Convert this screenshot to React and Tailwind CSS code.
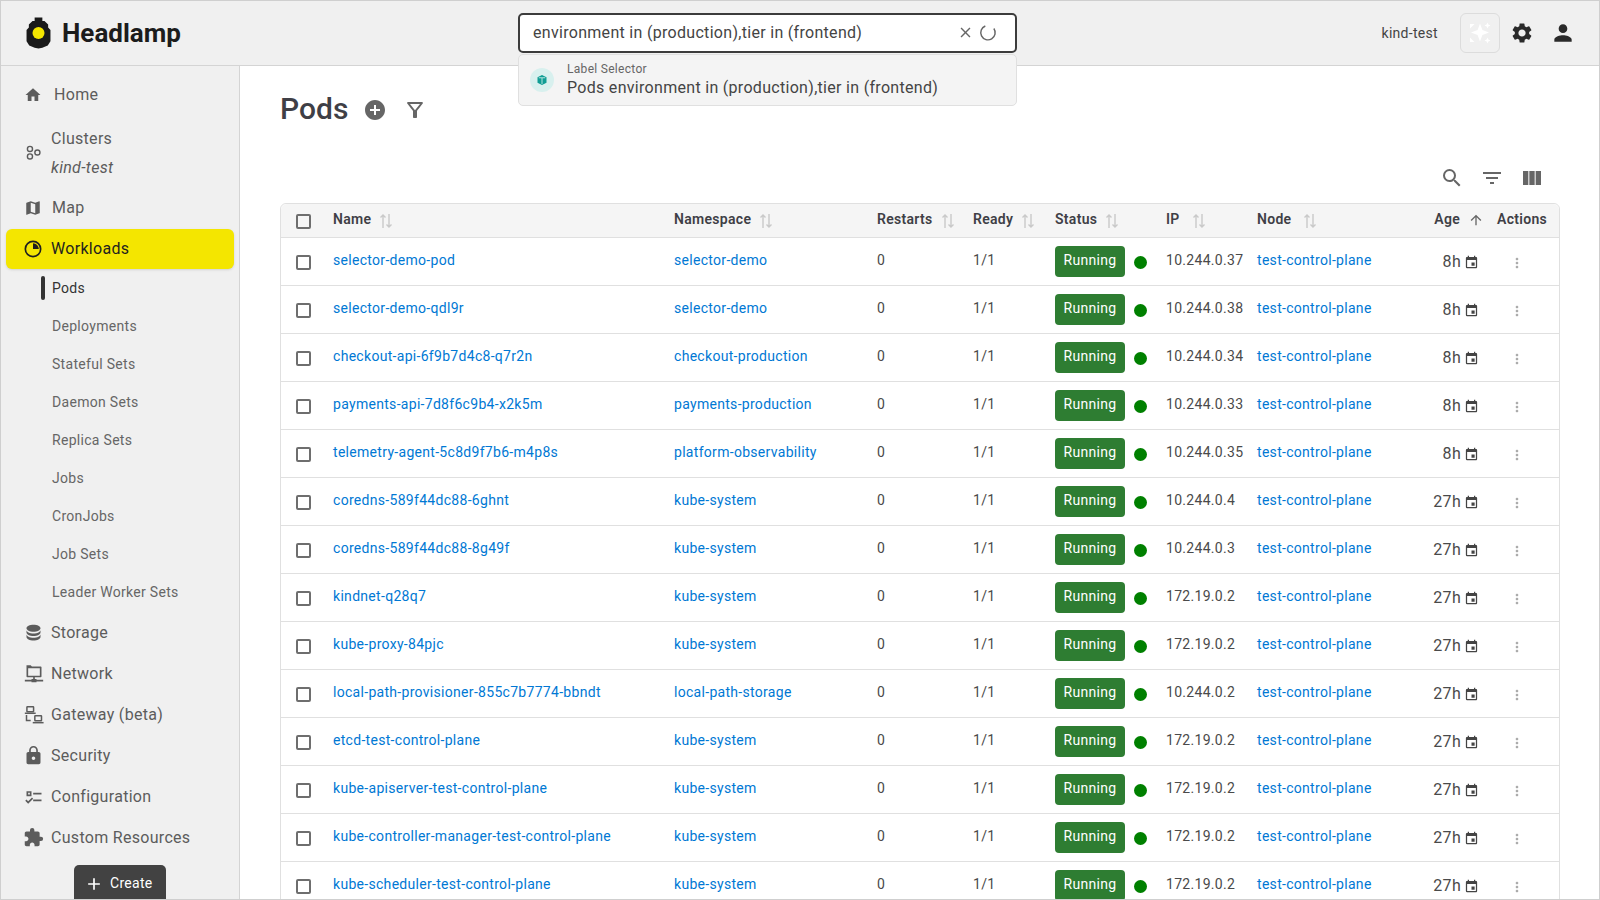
import React from "react";
import { MdSettings, MdPerson, MdSearch, MdFilterList, MdViewColumn, MdEvent, MdMoreVert, MdAddCircle, MdArrowUpward, MdClose, MdLock, MdExtension, MdOutlineFilterAlt, MdAdd } from "react-icons/md";

const I = ({ d, className = "" }) => (
  <svg viewBox="0 0 24 24" fill="currentColor" className={className}><path d={d} /></svg>
);
const paths = {
  home: "M10,20V14H14V20H19V12H22L12,3L2,12H5V20H10Z",
  map: "M15,19L9,16.89V5L15,7.11M20.5,3C20.44,3 20.39,3 20.34,3L15,5.1L9,3L3.36,4.9C3.15,4.97 3,5.15 3,5.38V20.5A0.5,0.5 0 0,0 3.5,21C3.55,21 3.61,21 3.66,21L9,18.9L15,21L20.64,19.1C20.85,19 21,18.85 21,18.62V3.5A0.5,0.5 0 0,0 20.5,3Z",
  db: "M12,3C7.58,3 4,4.79 4,7C4,9.21 7.58,11 12,11C16.42,11 20,9.21 20,7C20,4.79 16.42,3 12,3M4,9V12C4,14.21 7.58,16 12,16C16.42,16 20,14.21 20,12V9C20,11.21 16.42,13 12,13C7.58,13 4,11.21 4,9M4,14V17C4,19.21 7.58,21 12,21C16.42,21 20,19.21 20,17V14C20,16.21 16.42,18 12,18C7.58,18 4,16.21 4,14Z",
  config: "M3,5H9V11H3V5M5,7V9H7V7H5M11,7H21V9H11V7M11,15H21V17H11V15M5,20L1.5,16.5L2.91,15.09L5,17.17L9.59,12.59L11,14L5,20Z",
};
const Clusters = ({ className }) => (
  <svg viewBox="0 0 24 24" fill="none" stroke="currentColor" strokeWidth="2" className={className}>
    <circle cx="7" cy="7" r="3.6" /><circle cx="17.5" cy="12" r="3.6" /><circle cx="7" cy="17.5" r="3.6" />
  </svg>
);
const Slice = ({ className }) => (
  <svg viewBox="0 0 24 24" className={className}>
    <circle cx="12" cy="12" r="9.2" fill="none" stroke="currentColor" strokeWidth="2" />
    <path d="M12 5A7 7 0 0 1 19 12H12Z" fill="currentColor" />
  </svg>
);
const Network = ({ className }) => (
  <svg viewBox="0 0 24 24" fill="currentColor" className={className}>
    <path fillRule="evenodd" d="M3 1.5h5l1.5 1.5H20a1 1 0 0 1 1 1v11a1 1 0 0 1-1 1h-7v2h2v1h8v2h-8v1H9v-1H1v-2h8v-1h2v-2H4a1 1 0 0 1-1-1ZM5 5v9h14V5Z" />
  </svg>
);
const Gateway = ({ className }) => (
  <svg viewBox="0 0 24 24" fill="none" stroke="currentColor" strokeWidth="1.8" className={className}>
    <rect x="3.5" y="2" width="8" height="6" rx=".6" />
    <path d="M1 10h13M3 12v6.5h5" />
    <rect x="13" y="13" width="8" height="6" rx=".6" />
    <path d="M10.5 21.2h13" />
  </svg>
);
const Logo = ({ className }) => (
  <svg viewBox="0 0 28 32" className={className}>
    <path d="M10 0h8v3.6h2.2L24 7.2v3l2.4 2.8v11.6L23.6 29l-5.6 2.2-4 .8-4-.8L4.4 29l-2.8-4.4V13L4 10.2v-3l3.8-3.6H10Z" fill="#1a1a1a" />
    <circle cx="14" cy="16" r="6.2" fill="#f4e600" />
  </svg>
);
const Sparkle = ({ className }) => (
  <svg viewBox="0 0 24 24" fill="#fff" className={className}>
    <path d="M12 2.5l2.4 6.6 6.6 2.4-6.6 2.4L12 20.5l-2.4-6.6-6.6-2.4 6.6-2.4Z" />
    <path d="M19.5 1.5l.9 2.1 2.1.9-2.1.9-.9 2.1-.9-2.1-2.1-.9 2.1-.9ZM19.5 16.5l.9 2.1 2.1.9-2.1.9-.9 2.1-.9-2.1-2.1-.9 2.1-.9ZM2 3h4.5L2 7.5ZM2 16.5L6.5 21H2Z" />
  </svg>
);
const Cube = ({ className }) => (
  <svg viewBox="0 0 24 24" className={className}>
    <path d="M12 2l9 4.5v11L12 22l-9-4.5v-11Z" fill="#0f9d94" />
    <path d="M5.5 7.5h13M12 8v12" stroke="#d9f2ef" strokeWidth="1.6" />
  </svg>
);
const Sort = ({ className }) => (
  <svg viewBox="0 0 14 16" fill="none" stroke="#c9c9c9" strokeWidth="1.4" className={className}>
    <path d="M4 15V2M1.5 4.5 4 2l2.5 2.5M10 1v13M7.5 11.5 10 14l2.5-2.5" />
  </svg>
);
const Box = ({ className = "" }) => (
  <span className={`block w-[15px] h-[15px] rounded-[2px] border-2 border-[#6e6e6e] ${className}`} />
);

const nav1 = [
  { t: "Storage", i: <I d={paths.db} className="w-[21px] h-[21px]" /> },
  { t: "Network", i: <Network className="w-[20px] h-[20px]" /> },
  { t: "Gateway (beta)", i: <Gateway className="w-[20px] h-[20px]" /> },
  { t: "Security", i: <MdLock className="w-[21px] h-[21px]" /> },
  { t: "Configuration", i: <I d={paths.config} className="w-[20px] h-[20px]" /> },
  { t: "Custom Resources", i: <MdExtension className="w-[21px] h-[21px]" /> },
];
const subs = ["Deployments", "Stateful Sets", "Daemon Sets", "Replica Sets", "Jobs", "CronJobs", "Job Sets", "Leader Worker Sets"];

const S = "test-control-plane";
const rows = [
  ["selector-demo-pod", "selector-demo", "10.244.0.37", "8h"],
  ["selector-demo-qdl9r", "selector-demo", "10.244.0.38", "8h"],
  ["checkout-api-6f9b7d4c8-q7r2n", "checkout-production", "10.244.0.34", "8h"],
  ["payments-api-7d8f6c9b4-x2k5m", "payments-production", "10.244.0.33", "8h"],
  ["telemetry-agent-5c8d9f7b6-m4p8s", "platform-observability", "10.244.0.35", "8h"],
  ["coredns-589f44dc88-6ghnt", "kube-system", "10.244.0.4", "27h"],
  ["coredns-589f44dc88-8g49f", "kube-system", "10.244.0.3", "27h"],
  ["kindnet-q28q7", "kube-system", "172.19.0.2", "27h"],
  ["kube-proxy-84pjc", "kube-system", "172.19.0.2", "27h"],
  ["local-path-provisioner-855c7b7774-bbndt", "local-path-storage", "10.244.0.2", "27h"],
  ["etcd-test-control-plane", "kube-system", "172.19.0.2", "27h"],
  ["kube-apiserver-test-control-plane", "kube-system", "172.19.0.2", "27h"],
  ["kube-controller-manager-test-control-plane", "kube-system", "172.19.0.2", "27h"],
  ["kube-scheduler-test-control-plane", "kube-system", "172.19.0.2", "27h"],
];
const grid = "grid grid-cols-[52px_341px_203px_96px_82px_111px_91px_143px_94px_1fr] items-center";
const Head = ({ t, w = "ml-[8px]" }) => (
  <div className="flex items-center h-full pb-[2px] font-semibold text-[14px] text-[#3f3f46]">
    <span>{t}</span><Sort className={`w-[14px] h-[16px] mt-[3px] ${w}`} />
  </div>
);

export default function App() {
  return (
    <div className="relative h-[900px] w-[1600px] overflow-hidden border border-[#cfcfcf] bg-white text-[#4a4a4a] font-['Roboto',sans-serif] tracking-[0.3px]">
      <header className="relative z-10 h-[65px] bg-[#f0f0f0] border-b border-[#d4d4d4] flex items-center">
        <div className="ml-[24px] w-[493px] flex items-center gap-[10px]">
          <Logo className="w-[27px] h-[32px]" />
          <span className="text-[26px] font-bold text-[#1c1c1c] tracking-normal">Headlamp</span>
        </div>
        <div className="relative w-[499px] h-[40px] mt-[-1px] bg-white border-2 border-[#3c3c3c] rounded-[5px] flex items-center pl-[13px] pr-[18px] text-[16px] text-[#444]">
          <span className="flex-1">environment in (production),tier in (frontend)</span>
          <MdClose className="w-[17px] h-[17px] text-[#666]" />
          <svg viewBox="0 0 20 20" fill="none" stroke="#666" strokeWidth="1.6" className="w-[18px] h-[18px] ml-[5px]">
            <path d="M7 2.2A8 8 0 1 0 16.5 5" />
          </svg>
          <div className="absolute left-[-2px] top-[39px] w-[499px] h-[52px] bg-[#f4f4f4] border border-[#e0e0e0] rounded-[5px] flex items-center pl-[11px]">
            <span className="w-[24px] h-[24px] rounded-full bg-[#d8f0ee] flex items-center justify-center mr-[13px]">
              <Cube className="w-[12px] h-[12px]" />
            </span>
            <div className="flex flex-col">
              <span className="text-[12px] leading-[15px] text-[#666]">Label Selector</span>
              <span className="text-[16px] leading-[21px] text-[#444]">Pods environment in (production),tier in (frontend)</span>
            </div>
          </div>
        </div>
        <div className="flex-1 flex items-center justify-end pr-[23px]">
          <span className="text-[14px] text-[#444] mr-[22px]">kind-test</span>
          <span className="w-[40px] h-[40px] rounded-[6px] border border-[#dcdcdc] flex items-center justify-center mr-[10px]">
            <Sparkle className="w-[24px] h-[24px]" />
          </span>
          <MdSettings className="w-[24px] h-[24px] text-[#2a2a2a] mr-[16px]" />
          <MdPerson className="w-[26px] h-[26px] text-[#2a2a2a]" />
        </div>
      </header>

      <div className="flex h-[834px]">
        <aside className="relative w-[239px] shrink-0 bg-[#f0f0f0] border-r border-[#d4d4d4] text-[16px] text-[#5c5c5c]">
          <div className="h-[52px] pt-[6px] flex items-center pl-[23px] gap-[10px] pb-[0px]">
            <I d={paths.home} className="w-[18px] h-[18px]" /><span className="ml-[2px]">Home</span>
          </div>
          <div className="h-[69px] flex items-center pl-[24px]">
            <Clusters className="w-[17px] h-[17px]" />
            <div className="ml-[9px] flex flex-col leading-[29px]"><span>Clusters</span><span className="italic">kind-test</span></div>
          </div>
          <div className="h-[40px] mt-[1px] flex items-center pl-[23px]">
            <I d={paths.map} className="w-[18px] h-[18px]" /><span className="ml-[10px]">Map</span>
          </div>
          <div className="mx-[5px] mt-[1px] h-[40px] rounded-[6px] bg-[#f4e600] text-[#1f1f1f] flex items-center pl-[17px] shadow-sm">
            <Slice className="w-[20px] h-[20px]" /><span className="ml-[8px]">Workloads</span>
          </div>
          <div className="mt-[0px] text-[14px] text-[#5c5c5c]">
            <div className="relative h-[38px] flex items-center pl-[51px] text-[#333]">
              <span className="absolute left-[40px] top-[7px] h-[24px] w-[4px] rounded bg-[#333]" />Pods
            </div>
            {subs.map((s) => <div key={s} className="h-[38px] flex items-center pl-[51px] text-[#666]">{s}</div>)}
          </div>
          <div className="mt-[1px]">
            {nav1.map((n) => (
              <div key={n.t} className="h-[41px] flex items-center pl-[22px]">
                <span className="w-[21px] flex justify-center">{n.i}</span><span className="ml-[7px]">{n.t}</span>
              </div>
            ))}
          </div>
          <div className="absolute left-[73px] top-[799px] w-[92px] h-[40px] rounded-[5px] bg-[#424242] text-white text-[14px] flex items-center pb-[4px] pl-[10px]">
            <MdAdd className="w-[20px] h-[20px] mr-[6px] mt-[2px]" />Create
          </div>
        </aside>

        <main className="flex-1 min-w-0 pl-[40px] pr-[39px]">
          <div className="h-[83px] flex items-center pt-[1px]">
            <h1 className="text-[30px] font-medium text-[#3f3f46] tracking-normal">Pods</h1>
            <MdAddCircle className="w-[24px] h-[24px] ml-[15px] text-[#666] mt-[4px]" />
            <MdOutlineFilterAlt className="w-[24px] h-[24px] ml-[16px] text-[#666] mt-[4px]" />
          </div>
          <div className="h-[54px] flex items-end justify-end pr-[16px] gap-[16px] text-[#666] pb-[0px]">
            <MdSearch className="w-[24px] h-[24px] mb-[13px]" />
            <MdFilterList className="w-[24px] h-[24px] mb-[13px]" />
            <MdViewColumn className="w-[24px] h-[24px] mb-[13px]" />
          </div>
          <div className="border border-[#e0e0e0] rounded-t-[6px]">
            <div className={`${grid} h-[34px] bg-[#f5f5f5] border-b border-[#e0e0e0] rounded-t-[6px]`}>
              <div className="pl-[15px]"><Box className="mt-[1px]" /></div>
              <Head t="Name" /><Head t="Namespace" /><Head t="Restarts" /><Head t="Ready" /><Head t="Status" /><Head t="IP" w="ml-[12px]" /><Head t="Node" w="ml-[12px]" />
              <div className="flex items-center justify-end h-full pb-[2px] font-semibold text-[14px] text-[#3f3f46] pr-[10px]">
                <span>Age</span><MdArrowUpward className="w-[16px] h-[16px] ml-[8px] text-[#666]" />
              </div>
              <div className="font-semibold text-[14px] text-[#3f3f46] pb-[2px] pl-[3px]">Actions</div>
            </div>
            {rows.map((r) => (
              <div key={r[0]} className={`${grid} h-[48px] border-b border-[#e0e0e0] text-[14px]`}>
                <div className="pl-[15px]"><Box className="mt-[2px]" /></div>
                <a className="text-[#0078d4] pb-[2px]">{r[0]}</a>
                <a className="text-[#0078d4] pb-[2px]">{r[1]}</a>
                <div className="pb-[2px]">0</div>
                <div className="pb-[2px]">1/1</div>
                <div className="flex items-center">
                  <span className="w-[70px] h-[31px] rounded-[4px] bg-[#2e7d32] text-white flex items-center justify-center pb-[2px]">Running</span>
                  <span className="w-[13px] h-[13px] rounded-full bg-[#008000] ml-[9px] mt-[2px]" />
                </div>
                <div className="pb-[2px]">{r[2]}</div>
                <a className="text-[#0078d4] pb-[2px]">{S}</a>
                <div className="flex items-center justify-end pr-[15px] text-[16px]">
                  {r[3]}<MdEvent className="w-[15px] h-[15px] ml-[3px] text-[#444] mt-[1px]" />
                </div>
                <div className="pl-[15px]"><MdMoreVert className="w-[16px] h-[16px] text-[#aaa] mt-[2px]" /></div>
              </div>
            ))}
          </div>
        </main>
      </div>
    </div>
  );
}
